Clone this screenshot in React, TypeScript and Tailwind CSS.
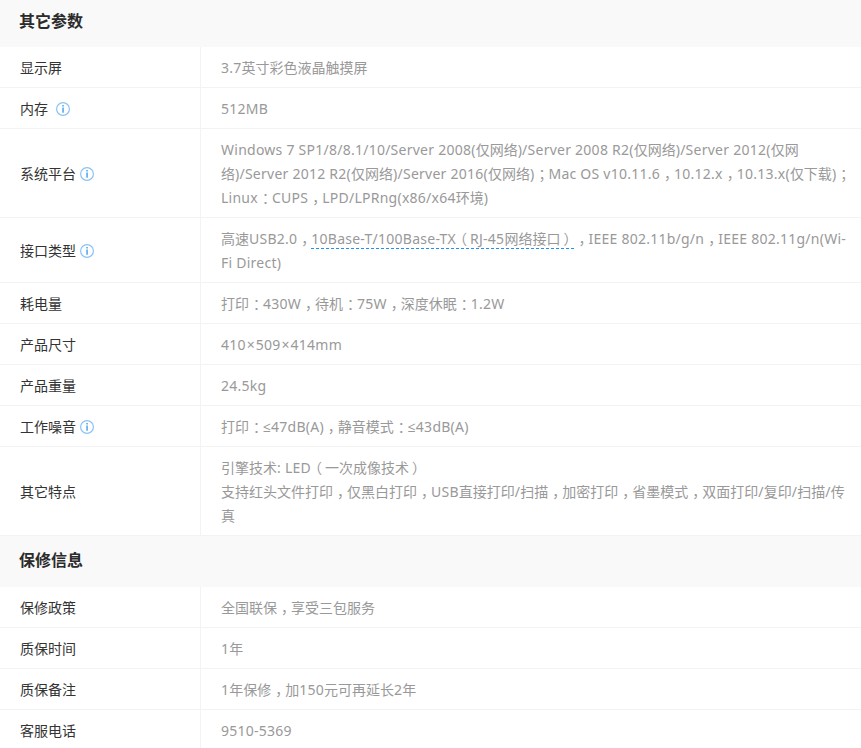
import type { ReactNode } from "react";

function T({ children }: { children: string }) {
  const parts = children.match(/≤|×|[\x00-\x7F]+|[，：；]|（|）|[^\x00-\x7F×≤，：；（）]+/g) ?? [];
  return (
    <>
      {parts.map((p, i) => {
        if (p === "≤") return <span key={i} className="leading-[0] font-['Open_Sans',sans-serif]">{p}</span>;
        if (p === "×") return <span key={i} className="px-[1px]">{p}</span>;
        if (/^[\x00-\x7F]/.test(p)) return <span key={i} className="tracking-[0.25px]">{p}</span>;
        if (/^[，：；]/.test(p)) return <span key={i} className="pl-[4px] tracking-[-4px]">{p}</span>;
        if (p === "（") return <span key={i} className="ml-[-3px] mr-[3px]">{p}</span>;
        if (p === "）") return <span key={i} className="pl-[3px] tracking-[-3px]">{p}</span>;
        return <span key={i}>{p}</span>;
      })}
    </>
  );
}

function Info({ className = "" }: { className?: string }) {
  return (
    <svg width="14" height="14" viewBox="0 0 14 14" className={"shrink-0 " + className}>
      <circle cx="7" cy="7" r="6.4" fill="none" stroke="#8cc3f5" strokeWidth="1.2" />
      <rect x="6.3" y="3" width="1.5" height="1.5" fill="#4aa3ee" />
      <rect x="6.3" y="5.5" width="1.5" height="5.2" fill="#4aa3ee" />
    </svg>
  );
}

function Header({ title, h }: { title: string; h: string }) {
  return <div className={"flex items-center bg-[#f9f9f9] pl-[19px] text-base font-bold text-[#2b2b2b] " + h}>{title}</div>;
}

function Row({ label, info, gap, children }: { label: string; info?: boolean; gap?: string; children: ReactNode }) {
  return (
    <div className="flex border-b border-[#f3f3f3]">
      <div className="flex w-[201px] shrink-0 items-center border-r border-[#f3f3f3] pl-5 pt-[2px] text-[#333]">
        <span>{label}</span>
        {info && <Info className={gap ?? "ml-1"} />}
      </div>
      <div className="min-w-0 flex-1 pb-[7px] pl-5 pr-[10px] pt-[9px] text-[#999]">{children}</div>
    </div>
  );
}

export default function App() {
  return (
    <div className="h-[748px] w-[861px] overflow-hidden bg-white text-sm leading-6 [text-spacing-trim:space-all] font-['Noto_Sans','Noto_Sans_CJK_SC',sans-serif]">
      <Header title="其它参数" h="h-[47px] pb-[5px]" />
      <Row label="显示屏"><T>3.7英寸彩色液晶触摸屏</T></Row>
      <Row label="内存" info gap="ml-[8px]"><T>512MB</T></Row>
      <Row label="系统平台" info>
        <T>Windows 7 SP1/8/8.1/10/Server 2008(仅网络)/Server 2008 R2(仅网络)/Server 2012(仅网络)/Server 2012 R2(仅网络)/Server 2016(仅网络)；Mac OS v10.11.6，10.12.x，10.13.x(仅下载)；Linux：CUPS，LPD/LPRng(x86/x64环境)</T>
      </Row>
      <Row label="接口类型" info>
        <T>高速USB2.0，</T>
        <span className="border-b border-dashed border-[#1e90ef]"><T>10Base-T/100Base-TX（RJ-45网络接口）</T></span>
        <T>，IEEE 802.11b/g/n，IEEE 802.11g/n(Wi-Fi Direct)</T>
      </Row>
      <Row label="耗电量"><T>打印：430W，待机：75W，深度休眠：1.2W</T></Row>
      <Row label="产品尺寸"><T>410×509×414mm</T></Row>
      <Row label="产品重量"><T>24.5kg</T></Row>
      <Row label="工作噪音" info><T>打印：≤47dB(A)，静音模式：≤43dB(A)</T></Row>
      <Row label="其它特点">
        <T>引擎技术: LED（一次成像技术）</T>
        <br />
        <T>支持红头文件打印，仅黑白打印，USB直接打印/扫描，加密打印，省墨模式，双面打印/复印/扫描/传真</T>
      </Row>
      <Header title="保修信息" h="h-[51px] pb-[3px]" />
      <Row label="保修政策"><T>全国联保，享受三包服务</T></Row>
      <Row label="质保时间"><T>1年</T></Row>
      <Row label="质保备注"><T>1年保修，加150元可再延长2年</T></Row>
      <Row label="客服电话"><T>9510-5369</T></Row>
    </div>
  );
}
